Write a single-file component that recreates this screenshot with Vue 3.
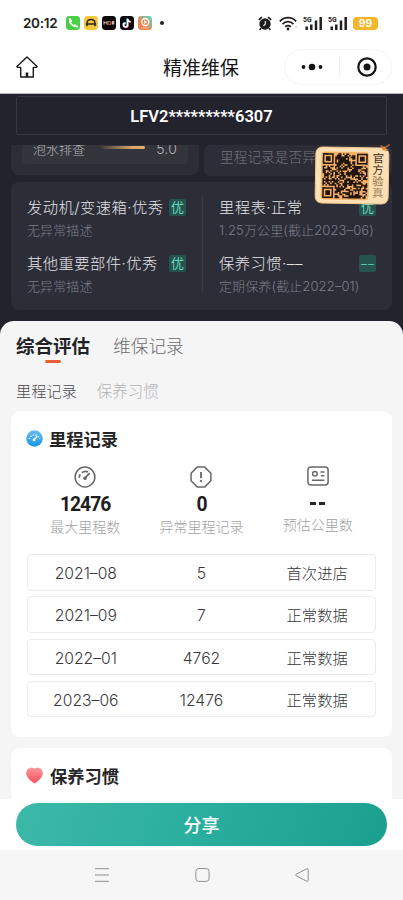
<script setup>
const N = 29
function finder(x, y, ox, oy) {
  const dx = x - ox, dy = y - oy
  if (dx < -1 || dx > 7 || dy < -1 || dy > 7) return null
  if (dx === -1 || dx === 7 || dy === -1 || dy === 7) return false
  const r = Math.max(Math.abs(dx - 3), Math.abs(dy - 3))
  return r !== 2
}
let seed = 4711
let qrPath = ''
for (let y = 0; y < N; y++) {
  for (let x = 0; x < N; x++) {
    seed = (seed * 1103515245 + 12345) % 2147483648
    let on = seed / 2147483648 > 0.36
    for (const [ox, oy] of [[0, 0], [N - 7, 0], [0, N - 7]]) {
      const f = finder(x, y, ox, oy)
      if (f !== null) on = f
    }
    if (on) qrPath += `M${x} ${y}h1v1h-1z`
  }
}

const checks = [
  { title: '发动机/变速箱·优秀', tag: '优', note: '无异常描述' },
  { title: '里程表·正常', tag: '优', note: '1.25万公里(截止2023–06)' },
  { title: '其他重要部件·优秀', tag: '优', note: '无异常描述' },
  { title: '保养习惯·––', tag: '––', note: '定期保养(截止2022–01)' },
]
const rows = [
  ['2021–08', '5', '首次进店'],
  ['2021–09', '7', '正常数据'],
  ['2022–01', '4762', '正常数据'],
  ['2023–06', '12476', '正常数据'],
]
</script>

<template>
  <div class="phone">
    <header class="status">
      <span class="clock">20:12</span>
      <svg class="app" viewBox="0 0 14 14"><rect width="14" height="14" rx="3.4" fill="#49cf45" /><path d="M3.6 3.600Q3.900 9.600 10.500 10.500" fill="none" stroke="#fff" stroke-width="1.500" /><path d="M3.900 3.200l.9 2.200M8.600 9.500l2.300 1.100" stroke="#fff" stroke-width="2.200" stroke-linecap="round" /></svg>
      <svg class="app" viewBox="0 0 14 14"><rect width="14" height="14" rx="3.4" fill="#f6c83b" /><path d="M3 10.300V7.500C3 2.300 11 2.300 11 7.500v2.800M1.800 8h10.400" fill="none" stroke="#252525" stroke-width="1.500" /></svg>
      <svg class="app" viewBox="0 0 14 14"><rect width="14" height="14" rx="3.4" fill="#090707" /><path d="M2 8.600V5.500l1.500 1.700L5 5.500v3.100M10.300 8.600V5.400h1.500v3.200M10.300 7h1.500" fill="none" stroke="#f2e9e4" stroke-width=".9" /><rect x="6" y="5.700" width="2.700" height="2.600" fill="none" stroke="#e06b45" stroke-width=".9" /></svg>
      <svg class="app" viewBox="0 0 14 14"><rect width="14" height="14" rx="3.4" fill="#07090d" /><g fill="none" stroke-width="1.500"><path d="M7.100 2.500v6.300a2 2 0 1 1-2-2M7.100 2.800c.3 1.600 1.400 2.500 3 2.600" stroke="#26d9db" /><path d="M8 3.100v6.300a2 2 0 1 1-2-2M8 3.400c.3 1.600 1.400 2.500 3 2.600" stroke="#ef3156" /><path d="M7.600 2.800v6.300a2 2 0 1 1-2-2M7.600 3.100c.3 1.600 1.400 2.500 3 2.600" stroke="#fff" /></g></svg>
      <svg class="app" viewBox="0 0 14 14"><defs><linearGradient id="live" x1="0" y1="1" x2="1" y2="0"><stop offset=".35" stop-color="#f08150" /><stop offset=".9" stop-color="#5fd3bd" /></linearGradient></defs><rect width="14" height="14" rx="3.4" fill="url(#live)" /><circle cx="7.300" cy="6" r="3.500" fill="#f08a50" stroke="#fff" stroke-width="1.300" /><path d="M6.200 4l3.300 2-3.300 2z" fill="#fff" /><path d="M3 11.900h8" stroke="#f9d4bb" stroke-width="1" stroke-dasharray="1.300 .6" /></svg>
      <i class="more-dot"></i>
      <div class="status-right">
        <svg width="14" height="15" viewBox="0 0 14 15"><circle cx="7" cy="8" r="5.700" fill="#1d1d1d" /><path d="M1 4A7 7 0 0 1 4 1.300M10 1.300A7 7 0 0 1 13 4M3 12.300l-1.400 1.600M11 12.300l1.400 1.600" fill="none" stroke="#1d1d1d" stroke-width="1.600" /><path d="M7.300 4.900v3.400l-1.900 1.400" fill="none" stroke="#fff" stroke-width="1.100" /></svg>
        <svg class="wifi" width="19" height="15" viewBox="0 0 19 15"><g fill="none" stroke="#202020" stroke-width="1.700"><path d="M.8 5.300C5.500.5 12.500.5 17.200 5.300M3.500 8.100c3.100-3.200 7.900-3.200 11 0M6.200 10.800c1.600-1.600 4-1.600 5.600 0" /></g><circle cx="9" cy="13" r="1.400" fill="#202020" /><path d="M17 9v3M15.800 11h2.400" stroke="#ddd" stroke-width=".8" /></svg>
        <svg v-for="n in 2" :key="n" class="signal" width="20" height="15" viewBox="0 0 20 15"><text x="0" y="5.800" class="five">5G</text><path d="M3.700 10.500V14M8.300 8.500V14M13 4.500V14M17.700 1V14" stroke="#202020" stroke-width="2.500" /></svg>
        <span class="battery">99</span>
      </div>
    </header>

    <nav class="nav">
      <svg class="home" width="22" height="22" viewBox="0 0 22 22"><path d="M11 1L.9 10.500l.7.900h3.100V21h12.600v-9.600h3.100l.7-.9z" fill="none" stroke="#191919" stroke-width="1.400" stroke-linejoin="round" /><path d="M11 16.500V21" stroke="#191919" stroke-width="2.500" /></svg>
      <h1>精准维保</h1>
      <div class="capsule">
        <svg width="22" height="8" viewBox="0 0 22 8"><g fill="#151515"><circle cx="2.500" cy="4" r="1.900" /><circle cx="11" cy="4" r="3.300" /><circle cx="19.500" cy="4" r="1.900" /></g></svg>
        <i></i>
        <svg width="20" height="20" viewBox="0 0 20 20"><circle cx="10" cy="10" r="8.700" fill="none" stroke="#151515" stroke-width="2.200" /><circle cx="10" cy="10" r="3.500" fill="#151515" /></svg>
      </div>
    </nav>

    <section class="dark">
      <div class="vin">LFV2*********6307</div>
      <div class="pair">
        <div class="mini left">
          <div class="inner"><span class="lab">泡水排查</span><i class="bar"></i><span class="score">5.0</span></div>
        </div>
        <div class="mini right"><span>里程记录是否异常</span></div>
      </div>
      <div class="checks">
        <div v-for="(c, i) in checks" :key="i" class="check">
          <div class="line"><span>{{ c.title }}</span><b>{{ c.tag }}</b></div>
          <p>{{ c.note }}</p>
        </div>
      </div>
      <div class="verify">
        <svg class="qr" viewBox="-1 -1 31 31" preserveAspectRatio="none"><path :d="qrPath" fill="#21150e" /></svg>
        <div class="vtext">官方<span class="mid">验</span><span class="dim">真</span></div>
        <svg class="spark" width="11" height="9" viewBox="0 0 11 9"><path d="M1 2l3 2M4.500 5L10 1M6 7l3-1" stroke="#b66c2f" stroke-width="1.300" /><circle cx="4.500" cy="5" r="2" fill="#d98a3c" /></svg>
      </div>
    </section>

    <main class="sheet">
      <div class="tabs"><strong>综合评估</strong><span>维保记录</span></div>
      <div class="subtabs"><span>里程记录</span><span class="off">保养习惯</span></div>

      <section class="card mileage">
        <h2>
          <svg width="17" height="17" viewBox="0 0 17 17"><defs><linearGradient id="blue" x1="0" y1="0" x2="0" y2="1"><stop stop-color="#6abdf0" /><stop offset="1" stop-color="#1795ea" /></linearGradient></defs><circle cx="8.500" cy="8.500" r="8.200" fill="url(#blue)" /><path d="M3.300 9.200a5.300 5.300 0 0 1 10.400 0" fill="none" stroke="#e9f7ff" stroke-width="1.300" stroke-dasharray="1.300 1.400" /><path d="M8.100 9.700l3.200-3.400" stroke="#fff" stroke-width="1.300" /><circle cx="8.100" cy="9.800" r="1.500" fill="#fff" /></svg>
          <span>里程记录</span>
        </h2>
        <div class="stats">
          <div class="stat">
            <svg width="22" height="22" viewBox="0 0 22 22"><g fill="none" stroke="#686868" stroke-width="1.500"><circle cx="11" cy="11" r="9.900" /><path d="M5.200 11.800a6 6 0 0 1 1-3.400M7.800 6.700A6 6 0 0 1 14 5.900" stroke-width="1.700" /><path d="M10.800 12.200l4.900-5" stroke-width="1.800" /></g><circle cx="11" cy="12.200" r="1.800" fill="#686868" /></svg>
            <b>12476</b><span>最大里程数</span>
          </div>
          <div class="stat">
            <svg width="22" height="22" viewBox="0 0 22 22"><path d="M7.200 1.100h7.600l6.100 6.100v7.600l-6.100 6.100H7.200l-6.100-6.100V7.200z" fill="none" stroke="#686868" stroke-width="1.500" stroke-linejoin="round" /><path d="M11 6v6.300M11 14v2" stroke="#686868" stroke-width="1.800" /></svg>
            <b>0</b><span>异常里程记录</span>
          </div>
          <div class="stat short">
            <svg width="22" height="20" viewBox="0 0 22 20"><g fill="none" stroke="#686868" stroke-width="1.500"><rect x=".9" y=".9" width="20.200" height="18.200" rx="3" /><circle cx="7.900" cy="7.700" r="2.300" /><path d="M13.500 6h4M14 9.800h3.500M5 14.200h12.500" /></g></svg>
            <b class="dash"><i></i><i></i></b><span>预估公里数</span>
          </div>
        </div>
        <div class="table">
          <div v-for="r in rows" :key="r[0]" class="row"><span class="num">{{ r[0] }}</span><span class="num">{{ r[1] }}</span><span>{{ r[2] }}</span></div>
        </div>
      </section>

      <section class="card habit">
        <h2>
          <svg width="17" height="17" viewBox="0 0 17 17"><defs><linearGradient id="red" x1="0" y1="0" x2="0" y2="1"><stop stop-color="#fa969b" /><stop offset="1" stop-color="#f7515e" /></linearGradient></defs><path d="M8.500 16.400C6.600 15.300.2 11.300.2 6.300.2.800 5.900-.2 8.500 1.500c2.600-1.700 8.300-.7 8.300 4.800 0 5-6.400 9-8.300 10.100z" fill="url(#red)" /></svg>
          <span>保养习惯</span>
        </h2>
      </section>
    </main>

    <div class="action"><button>分享</button></div>
    <footer class="sys">
      <svg width="16" height="14" viewBox="0 0 16 14"><path d="M1 .7h14M1 7h14M1 13.300h14" stroke="#909090" /></svg>
      <svg width="15" height="14" viewBox="0 0 15 14"><rect x=".9" y=".6" width="13.200" height="12.800" rx="2.800" fill="none" stroke="#909090" /></svg>
      <svg width="14" height="14" viewBox="0 0 14 14"><path d="M1.200 6.200L11.700.8q1.500-.5 1.500 1v10.400q0 1.500-1.500 1L1.200 7.800q-1.200-.8 0-1.600z" fill="none" stroke="#909090" /></svg>
    </footer>
  </div>
</template>

<style>
body { margin: 0; background: #fff; }
</style>
<style scoped>
* { box-sizing: border-box; }
.phone { width: 403px; height: 900px; display: flex; flex-direction: column; overflow: hidden; background: #fff; font-family: "Noto Sans CJK SC", sans-serif; font-weight: 300; white-space: nowrap; }
svg { display: block; flex: none; }
h1, h2, p { margin: 0; }
.status { height: 46px; display: flex; align-items: center; padding: 0 25px 0 23px; flex: none; }
.clock { width: 43px; font: 600 13.500px/20px Inter, sans-serif; letter-spacing: -.3px; color: #222; }
.app { width: 14px; height: 14px; margin-right: 4px; }
.more-dot { width: 4px; height: 4px; border-radius: 50%; background: #222; margin-left: 4px; }
.status-right { display: flex; align-items: center; margin-left: auto; }
.wifi { margin: 0 5px 0 7px; }
.signal { margin-right: 5px; }
.five { font: 700 6.800px Roboto, sans-serif; fill: #202020; }
.battery { width: 25px; height: 13px; border-radius: 4px; background: #f4b52b; color: #fff; font: 600 10.500px/14px Inter, sans-serif; text-align: center; }
.nav { height: 48px; display: flex; align-items: flex-start; padding: 3px 11px 0 16px; border-bottom: 1px solid #b8b8bb; flex: none; }
.home { margin-top: 7px; }
.nav h1 { margin-left: 125px; font-size: 19px; line-height: 36px; font-weight: 400; color: #141414; }
.capsule { width: 108px; height: 36px; margin-left: auto; border: 1px solid #f5f5f5; border-radius: 18px; display: flex; align-items: center; padding: 0 14px 0 16px; }
.capsule i { width: 1px; height: 20px; background: #eee; margin: 0 17px 0 16px; }

.dark { position: relative; height: 227px; flex: none; background: #23232d; padding: 2px 11px 0; color: #dadadf; }
.vin { height: 39px; margin: 0 5px; border: 1px solid #373742; border-radius: 2px; color: #fff; text-align: center; font: 600 16.500px/39px Roboto, sans-serif; }
.pair { display: flex; gap: 5px; margin-top: 10px; height: 31px; overflow: hidden; }
.mini { width: 188px; background: #2d2d37; border-radius: 0 0 8px 8px; overflow: hidden; }
.mini.left { height: 30px; padding: 0 11px; }
.mini.right { padding: 0 16px; border-radius: 6px; font-size: 13.700px; line-height: 23px; color: #73737b; }
.inner { height: 19px; background: #34343c; border-radius: 0 0 4px 4px; display: flex; padding: 0 11px; font-size: 13px; line-height: 7px; color: #b0b0b4; overflow: hidden; }
.lab { width: 67px; }
.bar { width: 46px; height: 3px; margin-top: 1px; border-radius: 2px; background: linear-gradient(90deg, #3a3735, #d9a367 70%, #e6ac6b); }
.score { margin-left: 11px; font-family: Inter, sans-serif; font-size: 14px; letter-spacing: .2px; }
.checks { margin-top: 6px; height: 128px; border-radius: 8px; background: #2d2d38; padding: 12px 16px 0; display: grid; grid-template-columns: 175px 174px; grid-auto-rows: 56px; background-image: linear-gradient(#3a3a45, #3a3a45); background-size: 1px 97px; background-position: 191px 14px; background-repeat: no-repeat; }
.check:nth-child(even) { padding-left: 17px; width: 174px; }
.check { width: 159px; }
.line { display: flex; justify-content: space-between; align-items: center; height: 27px; font-family: Inter, "Noto Sans CJK SC", sans-serif; font-size: 15.300px; line-height: 24px; letter-spacing: .45px; color: #e3e3e7; }
.line span { width: 142px; }
.line b { width: 17px; height: 17px; border-radius: 2px; background: #27534f; color: #66d6b9; font-family: "Noto Sans CJK SC", sans-serif; font-size: 13px; line-height: 16px; font-weight: 400; letter-spacing: 0; text-align: center; flex: none; }
.check p { margin-top: 0; font-family: Inter, "Noto Sans CJK SC", sans-serif; font-size: 13px; line-height: 18px; letter-spacing: .12px; color: #7c7c85; }
.verify { position: absolute; left: 315px; top: 53px; width: 74px; height: 57px; padding: 4px 4px 4px 5px; border-radius: 7px; background: #fbe0b5; border: 1px solid #f2c58b; display: flex; gap: 2px; transform: rotate(1deg); }
.qr { width: 48px; height: 48px; background: #f4b165; border-radius: 4px; }
.vtext { width: 14px; height: 48px; writing-mode: vertical-rl; font-size: 11.500px; line-height: 14px; font-weight: 400; color: #49311e; }
.mid { color: #8f704c; }
.dim { color: #a98a60; }
.spark { position: absolute; right: -2px; top: -5px; }

.sheet { flex: none; height: 479px; padding: 0 11px; background: linear-gradient(#23232d 0 20px, #fff 20px); overflow: hidden; position: relative; z-index: 0; }
.sheet::before { content: ""; position: absolute; inset: 0; z-index: -1; border-radius: 14px 14px 0 0; background: #f5f5f6; }
.tabs { display: flex; height: 58px; padding: 10px 5px 0; font-size: 17.700px; line-height: 29px; color: #6c6c6e; }
.tabs strong { width: 97px; font-size: 18.500px; line-height: 28px; font-weight: 700; color: #222226; }
.tabs strong::after { content: ""; display: block; width: 16px; height: 3px; border-radius: 2px; margin: 1px 0 0 29px; background: #e85d31; }
.subtabs { display: flex; gap: 20px; height: 32px; padding-left: 5px; font-size: 15.200px; line-height: 23px; color: #4b4b4d; }
.off { color: #b4b4b6; font-size: 15.500px; }
.card { background: #fff; border-radius: 9px; padding: 0 16px; }
.mileage { height: 326px; }
.habit { height: 70px; margin-top: 11px; border-radius: 9px 9px 0 0; }
.card h2 { display: flex; align-items: center; gap: 6px; height: 55px; font-size: 17.300px; line-height: 26px; font-weight: 700; color: #252528; }
.card h2 svg { margin-left: -1px; }
.habit h2 { gap: 7px; }
.stats { display: grid; grid-template-columns: repeat(3, 1fr); height: 88px; }
.stat { display: flex; flex-direction: column; align-items: center; color: #a2a2a5; font-size: 14px; line-height: 20px; }
.stat b { height: 30px; font: 700 19.300px/34px Roboto, sans-serif; letter-spacing: -1px; color: #1e1e20; }
.stat span { margin-top: -2px; }
.stat .dash { display: flex; gap: 3px; padding-top: 16px; }
.dash i { width: 6px; height: 3px; background: #252527; }
.table { display: flex; flex-direction: column; gap: 5.700px; }
.row { height: 36.600px; border: 1px solid #ebebed; border-radius: 4px; display: grid; grid-template-columns: repeat(3, 1fr); text-align: center; font-size: 15.300px; line-height: 34px; color: #38383a; }
.num { font-family: Inter, "Noto Sans CJK SC", sans-serif; font-size: 15.700px; line-height: 37px; }
.action { height: 51px; flex: none; padding: 4px 16px; background: #fff; margin-top: -1px; position: relative; }
button { display: block; width: 371px; height: 43px; border: 0; border-radius: 22px; background: linear-gradient(110deg, #3db8a9, #28ad9c 55%, #1b9f8e); color: #fff; font: 500 18px/42px "Noto Sans CJK SC", sans-serif; padding: 0 0 1px; }
.sys { height: 50px; flex: none; background: #f6f6f6; display: flex; align-items: center; justify-content: space-between; padding: 0 94px; }
</style>
